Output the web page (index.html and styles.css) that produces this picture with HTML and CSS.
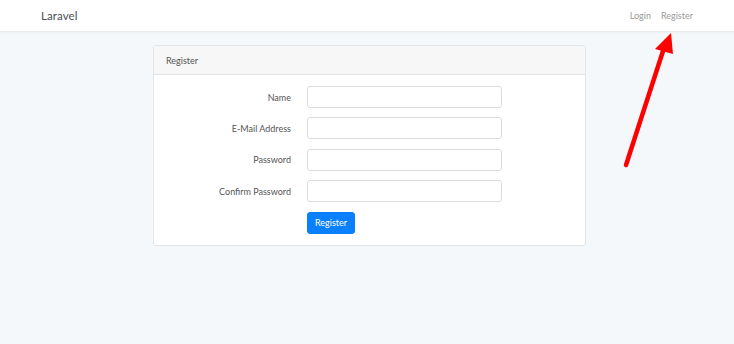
FILE: index.html
```html
<!DOCTYPE html>
<html>
<head>
<meta charset="utf-8">
<link rel="stylesheet" href="styles.css">
</head>
<body>
<nav class="navbar">
  <a class="brand">Laravel</a>
  <div class="nav-links">
    <a class="nav-link">Login</a>
    <a class="nav-link">Register</a>
  </div>
</nav>
<main class="main">
  <div class="card">
    <div class="card-header">Register</div>
    <form class="card-body">
      <div class="row"><label class="label">Name</label><input class="input" type="text"></div>
      <div class="row"><label class="label">E-Mail Address</label><input class="input" type="email"></div>
      <div class="row"><label class="label">Password</label><input class="input" type="password"></div>
      <div class="row"><label class="label">Confirm Password</label><input class="input" type="password"></div>
      <div class="row"><span class="label"></span><button class="btn" type="button">Register</button></div>
    </form>
  </div>
</main>
<svg class="arrow" width="734" height="344" viewBox="0 0 734 344">
  <line x1="626" y1="165" x2="664" y2="48" stroke="#ff0000" stroke-width="4.5" stroke-linecap="round"/>
  <polygon points="671,33 655,49 673,54" fill="#ff0000"/>
</svg>
</body>
</html>
```

FILE: styles.css
```css
* { box-sizing: border-box; }
html, body { margin: 0; padding: 0; }
body {
  background: #f5f8fa;
  font-family: "Lato", "Liberation Sans", sans-serif;
  color: #212529;
  width: 734px;
  height: 344px;
  overflow: hidden;
  position: relative;
}
.navbar {
  height: 32px;
  background: #fff;
  border-bottom: 1px solid #e8ecef;
  box-shadow: 0 1px 2px rgba(0,0,0,0.03);
  display: flex;
  align-items: center;
  justify-content: space-between;
  padding: 0 41px 0 41px;
}
.brand {
  font-size: 11.5px;
  color: #4a4f54;
  letter-spacing: 0.1px;
  padding-bottom: 1px;
}
.nav-links {
  display: flex;
  gap: 10px;
  padding-bottom: 1px;
}
.nav-link {
  font-size: 9px;
  color: #999;
}
.main {
  padding-top: 13px;
  padding-left: 5px;
  display: flex;
  justify-content: center;
}
.card {
  width: 433px;
  background: #fff;
  border: 1px solid #e3e6e8;
  border-radius: 3px;
}
.card-header {
  height: 29px;
  background: #f7f7f7;
  border-bottom: 1px solid #e3e6e8;
  font-size: 9px;
  color: #555;
  padding-left: 12px;
  display: flex;
  align-items: center;
}
.card-body {
  padding: 11px 0 11px 0;
  display: flex;
  flex-direction: column;
  gap: 9.4px;
}
.row {
  display: flex;
  align-items: center;
  height: 22px;
}
.label {
  width: 137px;
  text-align: right;
  font-size: 9px;
  color: #555;
  margin-right: 16px;
}
.input {
  width: 195px;
  height: 22px;
  border: 1px solid #d9dde0;
  border-radius: 3px;
  background: #fff;
  margin: 0;
  padding: 0 6px;
  font-size: 9px;
}
.btn {
  width: 48px;
  height: 22px;
  background: #0a80ff;
  color: #fff;
  border: 1px solid #0a7cf5;
  border-radius: 3px;
  font-family: inherit;
  font-size: 9px;
  padding: 0;
  margin: 0;
}
.arrow {
  position: absolute;
  left: 0;
  top: 0;
  pointer-events: none;
}
```
